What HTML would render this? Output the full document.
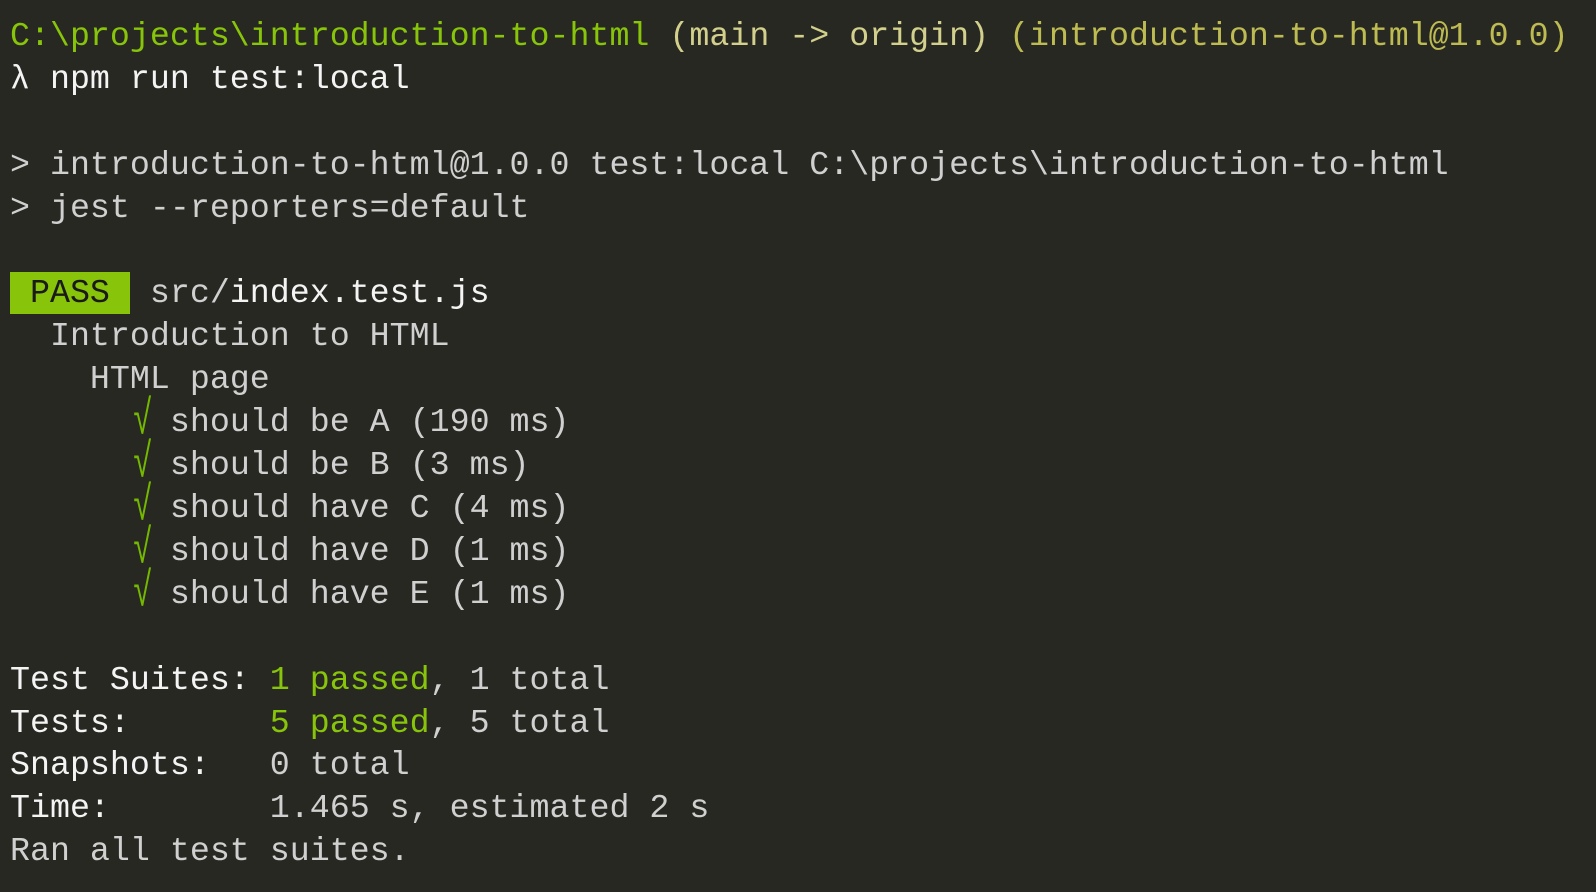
<!DOCTYPE html>
<html><head><meta charset="utf-8"><style>
html,body{margin:0;padding:0;background:#272822;width:1596px;height:892px;overflow:hidden}
pre{margin:0;padding:15px 0 0 10px;font-family:"Liberation Mono","DejaVu Sans Mono",monospace;font-size:33.3px;line-height:42.9px;color:#d0d0d0;white-space:pre}
.g{color:#87c40a}.y1{color:#d2d08c}.y2{color:#bdbb52}.w{color:#f4f4f4}
.pass{background:#87c40a;color:#1a1a1a;display:inline-block;line-height:42px}
.ck{color:#74b800;display:inline-block;width:20px;font-size:46px;line-height:0;transform:scale(0.7,1.05);vertical-align:-2px}
</style></head><body><pre><span class="g">C:\projects\introduction-to-html</span> <span class="y1">(main -&gt; origin)</span> <span class="y2">(introduction-to-html@1.0.0)</span>
<span class="w">λ npm run test:local</span>

&gt; introduction-to-html@1.0.0 test:local C:\projects\introduction-to-html
&gt; jest --reporters=default

<span class="pass"> PASS </span> src/<span class="w">index.test.js</span>
  Introduction to HTML
    HTML page
      <span class="ck">√</span> should be A (190 ms)
      <span class="ck">√</span> should be B (3 ms)
      <span class="ck">√</span> should have C (4 ms)
      <span class="ck">√</span> should have D (1 ms)
      <span class="ck">√</span> should have E (1 ms)

<span class="w">Test Suites: </span><span class="g">1 passed</span>, 1 total
<span class="w">Tests:       </span><span class="g">5 passed</span>, 5 total
<span class="w">Snapshots:   </span>0 total
<span class="w">Time:        </span>1.465 s, estimated 2 s
Ran all test suites.</pre></body></html>
